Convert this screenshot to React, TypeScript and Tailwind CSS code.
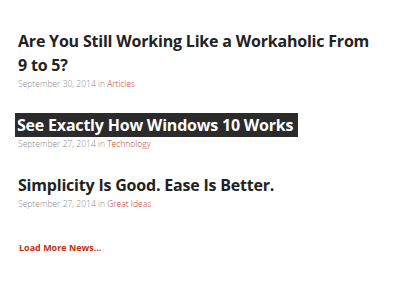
const POSTS = [
  { title: "Are You Still Working Like a Workaholic From 9 to 5?", date: "September 30, 2014", cat: "Articles", active: false },
  { title: "See Exactly How Windows 10 Works", date: "September 27, 2014", cat: "Technology", active: true },
  { title: "Simplicity Is Good. Ease Is Better.", date: "September 27, 2014", cat: "Great Ideas", active: false },
];

export default function App() {
  return (
    <div className="w-[400px] h-[300px] bg-white pl-[18px] pr-[30px] pt-[29px] font-['Open_Sans',sans-serif]">
      <div className="flex flex-col gap-[23px]">
        {POSTS.map((p) => (
          <div key={p.title}>
            <h2 className="text-[16px] leading-[24px] font-bold text-[#222] tracking-[-0.2px]">
              {p.active ? (
                <span className="bg-[#2b2b2b] text-white pl-[2px] pr-[5px] -ml-[3px] py-[1px]">{p.title}</span>
              ) : (
                p.title
              )}
            </h2>
            <p className="text-[8.5px] leading-[12px] font-light text-[#8a8a8a] mt-[1px]">
              {p.date} in <a className="text-[#c0392b]">{p.cat}</a>
            </p>
          </div>
        ))}
      </div>
      <a className="block mt-[31px] ml-[1px] text-[9px] font-bold text-[#c4300f]">
        Load More News...
      </a>
    </div>
  );
}
